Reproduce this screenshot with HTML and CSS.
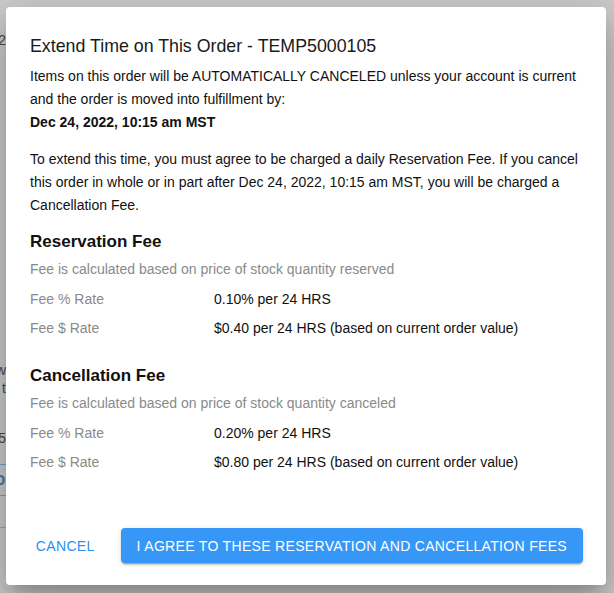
FILE: index.html
```html
<!DOCTYPE html>
<html lang="en">
<head>
<meta charset="UTF-8">
<meta name="viewport" content="width=device-width, initial-scale=1.0">
<title>Extend Time on This Order</title>
<link rel="stylesheet" href="styles.css">
</head>
<body>
<div class="screen">
  <div class="behind">
    <div class="behind-line first">2022</div>
    <div class="behind-line gap-w">w</div>
    <div class="behind-line">t</div>
    <div class="behind-line gap-5">5</div>
    <div class="behind-button"><span>OI</span></div>
    <div class="behind-rule"></div>
  </div>

  <div class="dialog">
    <h2 class="dialog-title">Extend Time on This Order - TEMP5000105</h2>
    <div class="dialog-content">
      <p class="intro">Items on this order will be AUTOMATICALLY CANCELED unless your account is current and the order is moved into fulfillment by:<br><strong>Dec 24, 2022, 10:15 am MST</strong></p>
      <p class="intro">To extend this time, you must agree to be charged a daily Reservation Fee. If you cancel this order in whole or in part after Dec 24, 2022, 10:15 am MST, you will be charged a Cancellation Fee.</p>

      <h3 class="fee-heading">Reservation Fee</h3>
      <div class="fee-note">Fee is calculated based on price of stock quantity reserved</div>
      <div class="fee-row">
        <span class="fee-label">Fee % Rate</span>
        <span class="fee-value">0.10% per 24 HRS</span>
      </div>
      <div class="fee-row">
        <span class="fee-label">Fee $ Rate</span>
        <span class="fee-value">$0.40 per 24 HRS (based on current order value)</span>
      </div>

      <h3 class="fee-heading second">Cancellation Fee</h3>
      <div class="fee-note">Fee is calculated based on price of stock quantity canceled</div>
      <div class="fee-row">
        <span class="fee-label">Fee % Rate</span>
        <span class="fee-value">0.20% per 24 HRS</span>
      </div>
      <div class="fee-row">
        <span class="fee-label">Fee $ Rate</span>
        <span class="fee-value">$0.80 per 24 HRS (based on current order value)</span>
      </div>
    </div>

    <div class="dialog-actions">
      <button class="btn-text">Cancel</button>
      <button class="btn-primary">I agree to these reservation and cancellation fees</button>
    </div>
  </div>
</div>
</body>
</html>
```

FILE: styles.css
```css
body, html {
  margin: 0;
  padding: 0;
  height: 100%;
  font-family: "Liberation Sans", Arial, Helvetica, sans-serif;
  background-color: #cccccc;
  overflow: hidden;
}
.screen {
  display: flex;
  height: 593px;
}
.behind {
  width: 6px;
  flex: none;
  overflow: hidden;
  display: flex;
  flex-direction: column;
  align-items: flex-end;
  font-size: 14px;
  color: #4a4a4a;
}
.behind-line {
  line-height: 18px;
  white-space: nowrap;
}
.behind-line.first {
  margin-top: 31px;
}
.behind-line.gap-w {
  margin-top: 312px;
}
.behind-line.gap-5 {
  margin-top: 32px;
}
.behind-button {
  margin-top: 17px;
  width: 40px;
  height: 30px;
  border-top: 1px solid #6f9fd0;
  border-bottom: 1px solid #6f9fd0;
  color: #3a78b8;
  font-weight: bold;
  line-height: 30px;
  text-align: right;
  white-space: nowrap;
}
.behind-button span {
  margin-right: -3px;
}
.behind-rule {
  margin-top: 31px;
  width: 6px;
  height: 1px;
  background-color: #a8a8a8;
}
.dialog {
  margin: 7px 0 0 0;
  width: 600px;
  height: 578px;
  background-color: #fff;
  border-radius: 4px;
  box-shadow: 0 11px 15px -7px rgba(0,0,0,0.2), 0 24px 38px 3px rgba(0,0,0,0.14), 0 9px 46px 8px rgba(0,0,0,0.12);
  display: flex;
  flex-direction: column;
  color: #111;
}
.dialog-title {
  margin: 0;
  padding: 27px 24px 0 24px;
  font-size: 17.8px;
  font-weight: normal;
  line-height: 24px;
  color: #1a1a1a;
}
.dialog-content {
  flex: 1;
  padding: 7px 24px 0 24px;
  font-size: 14px;
}
.intro {
  margin: 0 0 14px 0;
  line-height: 23px;
}
.intro strong {
  font-weight: bold;
}
.fee-heading {
  margin: 11px 0 0 0;
  font-size: 17px;
  font-weight: bold;
  line-height: 22px;
}
.fee-heading.second {
  margin-top: 26px;
}
.fee-note {
  margin-top: 5px;
  color: #8a8a8a;
  line-height: 22px;
}
.fee-row {
  display: flex;
  margin-top: 7.5px;
  line-height: 22px;
}
.fee-label {
  width: 184px;
  color: #8a8a8a;
}
.fee-value {
  color: #111;
}
.dialog-actions {
  display: flex;
  align-items: center;
  justify-content: flex-end;
  gap: 16px;
  padding: 0 23px 22px 20px;
}
.btn-text, .btn-primary {
  flex: none;
  white-space: nowrap;
  font-family: "Liberation Sans", Arial, Helvetica, sans-serif;
  font-size: 14px;
  text-transform: uppercase;
  letter-spacing: 0.32px;
  border: none;
  cursor: pointer;
  border-radius: 4px;
  height: 35px;
}
.btn-text {
  background: none;
  color: #2c8fef;
  padding: 0 10px;
}
.btn-primary {
  background-color: #3797f7;
  color: #fff;
  padding: 0 16px;
  box-shadow: 0 3px 1px -2px rgba(0,0,0,0.2), 0 2px 2px 0 rgba(0,0,0,0.14), 0 1px 5px 0 rgba(0,0,0,0.12);
}
```
